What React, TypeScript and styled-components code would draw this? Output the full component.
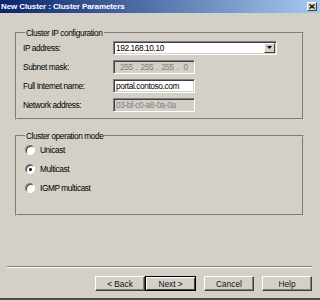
import * as React from 'react';
import styled, { createGlobalStyle } from 'styled-components';

const FACE = '#d4d0c8';
const SHADOW = '#808080';
const DARK = '#404040';
const HIGHLIGHT = '#ffffff';

const GlobalStyle = createGlobalStyle`
  html, body {
    margin: 0;
    padding: 0;
    background: ${FACE};
  }
  body {
    font-family: "Liberation Sans", Arial, sans-serif;
    font-size: 8.3px;
    letter-spacing: -0.4px;
    color: #000;
  }
`;

const Window = styled.div`
  width: 320px;
  height: 300px;
  box-sizing: border-box;
  background: ${FACE};
  border-bottom: 2px solid #4a4a4a;
  display: flex;
  flex-direction: column;
`;

const TitleBar = styled.div`
  height: 13px;
  display: flex;
  align-items: center;
  justify-content: space-between;
  padding: 0 3px 0 1px;
  background: linear-gradient(to right, #0a246a, #a6caf0);
`;

const Title = styled.span`
  color: #fff;
  font-weight: bold;
  font-size: 8px;
  letter-spacing: -0.1px;
`;

const CloseButton = styled.div`
  width: 10px;
  height: 9px;
  box-sizing: border-box;
  background: ${FACE};
  border: 1px solid;
  border-color: ${HIGHLIGHT} ${DARK} ${DARK} ${HIGHLIGHT};
  display: flex;
  align-items: center;
  justify-content: center;
`;

const Body = styled.div`
  flex: 1;
  display: flex;
  flex-direction: column;
  padding: 15px 16px 0 15px;
`;

const Group = styled.fieldset<{ $top: number; $bottom: number; $gap: number; $after: number }>`
  margin: 0 0 ${p => p.$after}px 0;
  padding: ${p => p.$top}px 6px ${p => p.$bottom}px 6px;
  border: 2px groove ${FACE};
  display: flex;
  flex-direction: column;
  gap: ${p => p.$gap}px;
  min-width: 0;
`;

const Legend = styled.legend`
  padding: 0 1px;
  margin-left: 2px;
  line-height: 10px;
`;

const FieldRow = styled.div`
  display: grid;
  grid-template-columns: 90px auto;
  align-items: center;
  height: 14px;
`;

const Label = styled.span`
  line-height: 10px;
`;

const Sunken = styled.div<{ $width: number; $disabled?: boolean }>`
  width: ${p => p.$width}px;
  height: 14px;
  box-sizing: border-box;
  border: 1px solid;
  border-color: ${SHADOW} ${HIGHLIGHT} ${HIGHLIGHT} ${SHADOW};
  box-shadow: inset 1px 1px ${DARK}, inset -1px -1px ${FACE};
  background: ${p => (p.$disabled ? FACE : '#fff')};
  color: ${p => (p.$disabled ? SHADOW : '#000')};
  display: flex;
  align-items: center;
  padding-left: 2px;
  line-height: 10px;
  white-space: nowrap;
  overflow: hidden;
`;

const ComboBox = styled(Sunken)`
  justify-content: space-between;
  padding-right: 1px;
`;

const DropButton = styled.div`
  width: 11px;
  height: 10px;
  box-sizing: border-box;
  background: ${FACE};
  border: 1px solid;
  border-color: ${HIGHLIGHT} ${DARK} ${DARK} ${HIGHLIGHT};
  display: flex;
  align-items: center;
  justify-content: center;
`;

const IpParts = styled.span`
  display: flex;
  gap: 3px;
  padding-left: 4px;
`;

const RadioRow = styled.label`
  display: flex;
  align-items: center;
  gap: 5px;
  height: 12px;
  padding-left: 2px;
`;

const RadioDot = styled.span<{ $checked?: boolean }>`
  width: 10px;
  height: 10px;
  box-sizing: border-box;
  border-radius: 50%;
  background: #fff;
  border: 1px solid;
  border-color: ${SHADOW} ${HIGHLIGHT} ${HIGHLIGHT} ${SHADOW};
  box-shadow: inset 1px 1px ${DARK};
  display: flex;
  align-items: center;
  justify-content: center;
  &::after {
    content: '';
    width: 3px;
    height: 3px;
    border-radius: 50%;
    background: ${p => (p.$checked ? '#000' : 'transparent')};
  }
`;

const Spacer = styled.div`
  flex: 1;
`;

const Separator = styled.div`
  margin: 0 -8px 0 -8px;
  height: 0;
  border-top: 1px solid ${SHADOW};
  border-bottom: 1px solid ${HIGHLIGHT};
`;

const ButtonBar = styled.div`
  display: flex;
  justify-content: flex-end;
  gap: 8px;
  margin: 8px -8px 7px 0;
`;

const Pair = styled.div`
  display: flex;
`;

const Button = styled.button<{ $default?: boolean }>`
  width: ${p => (p.$default ? 51 : 50)}px;
  height: 15px;
  box-sizing: border-box;
  padding: 0;
  background: ${FACE};
  font: inherit;
  color: #111;
  border: 1px solid;
  border-color: ${p =>
    p.$default ? '#000' : `${HIGHLIGHT} ${DARK} ${DARK} ${HIGHLIGHT}`};
  box-shadow: ${p =>
    p.$default
      ? `inset 1px 1px ${HIGHLIGHT}, inset -1px -1px ${DARK}`
      : `inset -1px -1px ${SHADOW}`};
  line-height: 10px;
`;

function App() {
  return (
    <Window>
      <GlobalStyle />
      <TitleBar>
        <Title>New Cluster : Cluster Parameters</Title>
        <CloseButton>
          <svg width="6" height="5" viewBox="0 0 6 5">
            <path d="M0.5 0.5 L5.5 4.5 M5.5 0.5 L0.5 4.5" stroke="#000" strokeWidth="1.2" />
          </svg>
        </CloseButton>
      </TitleBar>
      <Body>
        <Group $top={3} $bottom={6} $gap={5} $after={11}>
          <Legend>Cluster IP configuration</Legend>
          <FieldRow>
            <Label>IP address:</Label>
            <ComboBox $width={164}>
              <span>192.168.10.10</span>
              <DropButton>
                <svg width="5" height="4" viewBox="0 0 5 4">
                  <path d="M0 0 H5 L2.5 3 Z" fill="#000" />
                </svg>
              </DropButton>
            </ComboBox>
          </FieldRow>
          <FieldRow>
            <Label>Subnet mask:</Label>
            <Sunken $width={82} $disabled>
              <IpParts>
                <span>255</span>.<span>255</span>.<span>255</span>.<span>&nbsp;0</span>
              </IpParts>
            </Sunken>
          </FieldRow>
          <FieldRow>
            <Label>Full Internet name:</Label>
            <Sunken $width={82}>portal.contoso.com</Sunken>
          </FieldRow>
          <FieldRow>
            <Label>Network address:</Label>
            <Sunken $width={82} $disabled>03-bf-c0-a8-0a-0a</Sunken>
          </FieldRow>
        </Group>
        <Group $top={3} $bottom={20} $gap={7} $after={0}>
          <Legend>Cluster operation mode</Legend>
          <RadioRow>
            <RadioDot />
            Unicast
          </RadioRow>
          <RadioRow>
            <RadioDot $checked />
            Multicast
          </RadioRow>
          <RadioRow>
            <RadioDot />
            IGMP multicast
          </RadioRow>
        </Group>
        <Spacer />
        <Separator />
        <ButtonBar>
          <Pair>
            <Button>&lt; Back</Button>
            <Button $default>Next &gt;</Button>
          </Pair>
          <Button>Cancel</Button>
          <Button>Help</Button>
        </ButtonBar>
      </Body>
    </Window>
  );
}

export default App;
